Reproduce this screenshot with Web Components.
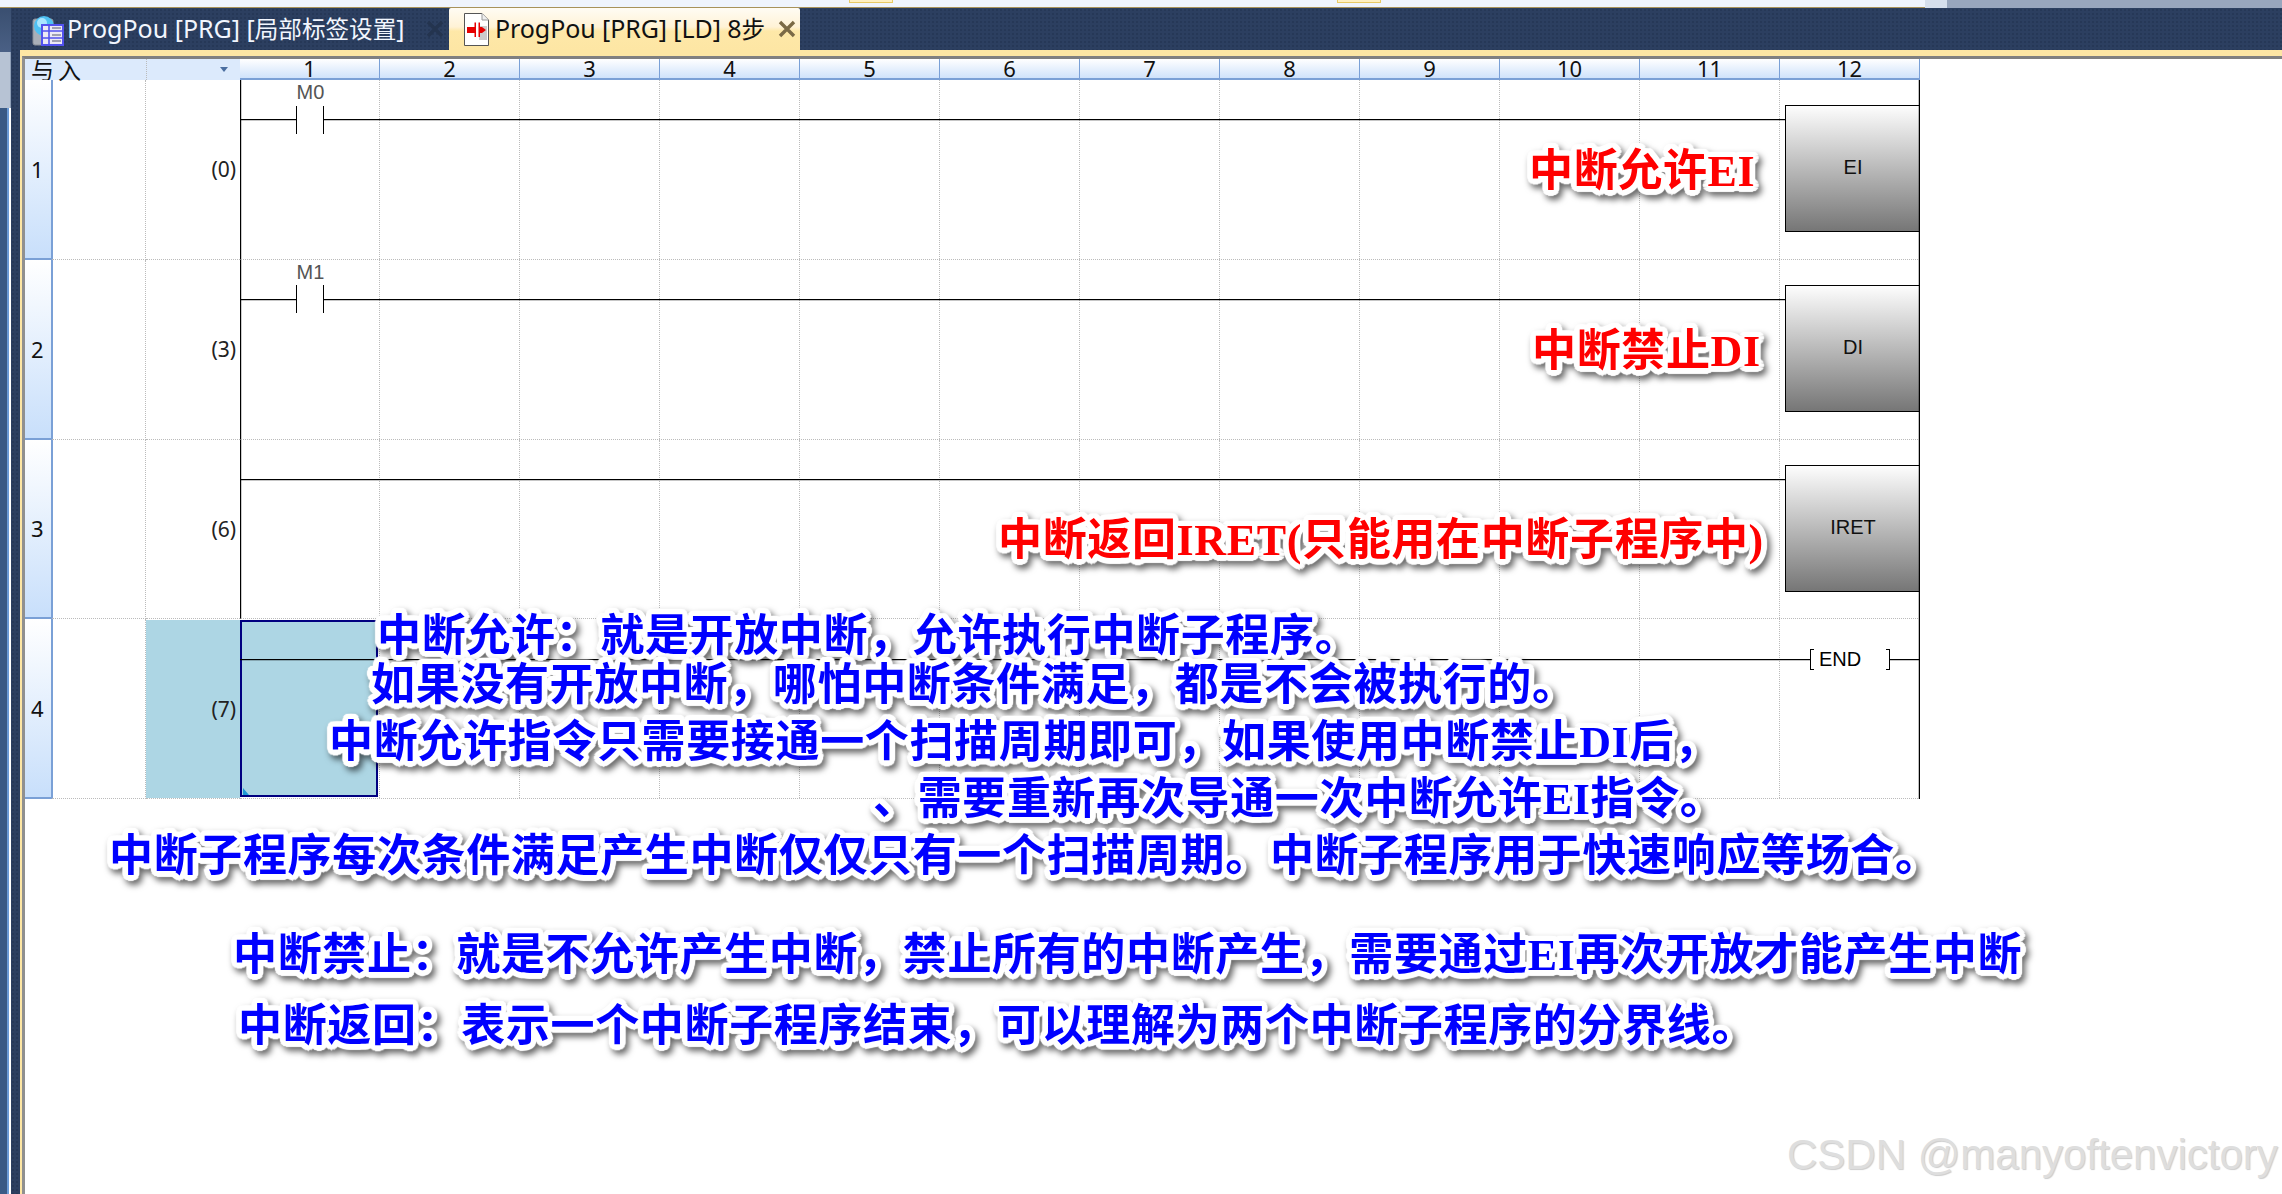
<!DOCTYPE html>
<html lang="zh">
<head>
<meta charset="utf-8">
<title>ProgPou</title>
<style>
html,body{margin:0;padding:0;background:#fff;}
body{width:2282px;height:1194px;overflow:hidden;font-family:"Noto Sans","Noto Sans CJK SC",sans-serif;}
</style>
</head>
<body>
<ide-app>
  <ide-tab slot="tabs" label="ProgPou [PRG] [局部标签设置]" kind="table"></ide-tab>
  <ide-tab slot="tabs" label="ProgPou [PRG] [LD] 8步" kind="ladder" active></ide-tab>
  <ladder-grid slot="doc">
    <ladder-row n="1" step="(0)" contact="M0" box="EI"></ladder-row>
    <ladder-row n="2" step="(3)" contact="M1" box="DI"></ladder-row>
    <ladder-row n="3" step="(6)" box="IRET"></ladder-row>
    <ladder-row n="4" step="(7)" end current></ladder-row>
  </ladder-grid>
  <note-text slot="notes" x="1529" y="172" color="#ff0000">中断允许EI</note-text>
  <note-text slot="notes" x="1532" y="352" color="#ff0000">中断禁止DI</note-text>
  <note-text slot="notes" x="998" y="541" color="#ff0000">中断返回IRET(只能用在中断子程序中)</note-text>
  <note-text slot="notes" x="377" y="637">中断允许：就是开放中断，允许执行中断子程序。</note-text>
  <note-text slot="notes" x="371" y="686">如果没有开放中断，哪怕中断条件满足，都是不会被执行的。</note-text>
  <note-text slot="notes" x="329" y="743">中断允许指令只需要接通一个扫描周期即可，如果使用中断禁止DI后，</note-text>
  <note-text slot="notes" x="873" y="800">、需要重新再次导通一次中断允许EI指令。</note-text>
  <note-text slot="notes" x="109" y="857">中断子程序每次条件满足产生中断仅仅只有一个扫描周期。中断子程序用于快速响应等场合。</note-text>
  <note-text slot="notes" x="233" y="956">中断禁止：就是不允许产生中断，禁止所有的中断产生，需要通过EI再次开放才能产生中断</note-text>
  <note-text slot="notes" x="238" y="1027">中断返回：表示一个中断子程序结束，可以理解为两个中断子程序的分界线。</note-text>
  <water-mark slot="notes">CSDN @manyoftenvictory</water-mark>
</ide-app>
<script>
const shadow=(el,html)=>{el.attachShadow({mode:'open'}).innerHTML=html;};

customElements.define('ide-app',class extends HTMLElement{
  constructor(){super();shadow(this,`<style>
    :host{display:grid;grid-template-rows:8px 1fr;width:2282px;height:1194px;position:relative;overflow:hidden;}
    .strip{display:flex;height:8px;background:#eff4fd;box-sizing:border-box;}
    .left{width:1925px;box-sizing:border-box;border-bottom:1px solid #a8925a;display:flex;}
    .s1{margin-left:849px;width:42px;height:2px;background:#fff0c2;border:1px solid #e8c964;border-top:0;}
    .s2{margin-left:444px;width:42px;height:2px;background:#fff0c2;border:1px solid #e8c964;border-top:0;}
    .mid{width:22px;background:#d6dfec;}
    .right{flex:1;background:#98a6bd;}
    .main{display:flex;min-height:0;}
    .side{width:11px;display:flex;flex-direction:column;background:#fff;}
    .side .a{height:44px;background:linear-gradient(#3a4f70,#4a6085);}
    .side .b{height:56px;background:#b7c3d4;border-right:1px solid #8fa0b8;box-sizing:border-box;}
    .side .c{flex:1;width:9px;background:linear-gradient(90deg,#3a5a85 0 7px,#6b9bd6 7px 9px);}
    .dock{flex:1;display:flex;flex-direction:column;min-width:0;
      background-color:#2c3f60;background-image:radial-gradient(#263857 1px,transparent 1.2px);background-size:4px 4px;}
    .tabs{height:42px;display:flex;padding-left:19px;}
    .doc{flex:1;margin-left:9px;min-height:0;border-top:6px solid #fde6a4;border-left:2px solid #fde6a4;}
    .doc2{height:100%;box-sizing:border-box;border-top:3px solid #808080;border-left:3px solid #909090;background:#fff;}
    </style>
    <div class="strip"><div class="left"><div class="s1"></div><div class="s2"></div></div><div class="mid"></div><div class="right"></div></div>
    <div class="main">
      <div class="side"><div class="a"></div><div class="b"></div><div class="c"></div></div>
      <div class="dock">
        <div class="tabs"><slot name="tabs"></slot></div>
        <div class="doc"><div class="doc2"><slot name="doc"></slot></div></div>
      </div>
    </div>
    <slot name="notes"></slot>`);}
});

customElements.define('ide-tab',class extends HTMLElement{
  connectedCallback(){
    const active=this.hasAttribute('active');
    const icon=this.getAttribute('kind')==='table'
    ?`<svg width="32" height="33" viewBox="0 0 32 33"><rect x="1" y="6" width="20" height="26" rx="2" fill="#a9afb8" stroke="#8a8f99"/><circle cx="12" cy="13" r="10" fill="#4fc0f2"/><circle cx="10" cy="10" r="5" fill="#a8e6ff"/><rect x="10" y="12" width="21" height="20" fill="#ece9f4" stroke="#5252ee" stroke-width="2"/><path d="M10 18H31M17 12V32M10 25H31" stroke="#5252ee" stroke-width="1.6" fill="none"/><path d="M20 15h9M20 22h9M20 28h9" stroke="#a0a0b0" stroke-width="2"/></svg>`
    :`<svg width="25" height="33" viewBox="0 0 25 33"><path d="M.5.5H18L24.5 7V32.5H.5Z" fill="#fff" stroke="#555"/><path d="M18 .5V7H24.5" fill="#eee" stroke="#999"/><path d="M15 13h8v14h-8z" fill="#ccc"/><path d="M3 14H10.5V9.5H12V24H10.5V20H3Z" fill="#e60000"/><path d="M14.5 9.5H16V14H18L22 17 18 20H16V24H14.5Z" fill="#e60000"/></svg>`;
    const label=this.getAttribute('label').replace(/[\u4e00-\u9fff]+/g,m=>`<span class="cjk">${m}</span>`);
    shadow(this,`<style>
      :host{display:flex;align-items:center;box-sizing:border-box;height:42px;color:${active?'#111':'#f2f6fe'};
        font:25px/1 "Noto Sans","Noto Sans CJK SC",sans-serif;white-space:nowrap;
        ${active?'width:351px;padding-left:15px;background:linear-gradient(#fffcf4 0,#fff2d6 45%,#fee8a8 55%,#fde6a4 100%);border-radius:2px 2px 0 0;':'width:419px;padding-left:2px;'}}
      .i{display:flex;width:${active?31:35}px;flex:none;}
      .l{width:${active?283:359}px;flex:none;${active?'letter-spacing:-.08px;':''}}
      .cjk{font-size:23.6px;}
      svg.x{flex:none;}
      </style><span class="i">${icon}</span><span class="l">${label}</span>
      <svg class="x" width="18" height="18" viewBox="0 0 18 18"><path d="M2 2 16 16M16 2 2 16" stroke="${active?'#7b6a46':'#24344f'}" stroke-width="3.4"/></svg>`);
  }
});

customElements.define('ladder-grid',class extends HTMLElement{
  constructor(){super();
    const cols=Array.from({length:12},(_,i)=>`<div class="c">${i+1}</div>`).join('');
    shadow(this,`<style>
      :host{display:grid;grid-template-columns:27px 94px 94px repeat(12,140px);grid-template-rows:21px repeat(4,179.75px);width:1895px;}
      .h0{background:#dceafc;font:23px/21px "Noto Sans CJK SC",sans-serif;color:#111;padding-left:6px;grid-column:1 / span 2;box-sizing:border-box;letter-spacing:4px;}
      .h1{background:#dceafc;border-left:1px dotted #bbb;position:relative;box-sizing:border-box;}
      .h1 svg{position:absolute;left:72px;top:8px;}
      .c{background:linear-gradient(#fff,#cfe2fb);border-right:1px solid #7aa0d6;border-bottom:2px solid #7aa0d6;box-sizing:border-box;text-align:center;font:22px/18px "Noto Sans",sans-serif;color:#111;}
      ::slotted(ladder-row){display:contents;}
      </style><div class="h0">与入</div><div class="h1"><svg width="10" height="6"><path d="M1 0H9L5 5Z" fill="#4a6ea0"/></svg></div>${cols}<slot></slot>`);}
});

customElements.define('ladder-row',class extends HTMLElement{
  connectedCallback(){
    const a=n=>this.getAttribute(n);
    const cur=this.hasAttribute('current');
    const vlines=Array.from({length:11},(_,i)=>`<i style="left:${(i+1)*140-(cur?1:2)}px"></i>`).join('');
    const wire=a('contact')
      ?`<div class="w" style="flex:none;width:55px"></div><div class="ct"></div><div class="w"></div>`
      :`<div class="w"></div>`;
    const tail=this.hasAttribute('end')
      ?`<div class="b1"></div><div class="endt">END</div><div class="b2"></div><div class="w" style="flex:none;width:30px"></div>`:'';
    const box=a('box')?`<div class="box">${a('box')}</div>`:'';
    shadow(this,`<style>
      :host{display:contents;}
      .n{background:linear-gradient(#fff,#c8dffb);border-right:2px solid #7aa0d6;border-bottom:2px solid #7aa0d6;box-sizing:border-box;font:22px/1 "Noto Sans",sans-serif;color:#111;display:flex;align-items:center;padding-left:6px;margin-right:-1px;}
      .cm{border-bottom:1px dotted #bbb;box-sizing:border-box;border-right:1px dotted #bbb;}
      .st{border-bottom:1px dotted #bbb;box-sizing:border-box;font:21px/1 "Noto Sans",sans-serif;color:#222;display:flex;align-items:center;justify-content:flex-end;padding:1px 4px 0 0;${cur?'background:#add6e4;background-clip:padding-box;border-top:1px solid transparent;':''}}
      .r{grid-column:span 12;position:relative;box-sizing:border-box;border-bottom:1px dotted #bbb;display:flex;align-items:flex-start;
         ${cur?'':'border-left:1px solid #000;box-shadow:inset .5px 0 0 rgba(0,0,0,.4);'}}
      .r::after{content:"";position:absolute;right:0;top:0;bottom:-1px;border-right:1px solid #000;box-shadow:-1px 0 0 rgba(0,0,0,.25);}
      .gl i{position:absolute;top:0;bottom:0;border-left:1px dotted #bbb;}
      .cur{position:absolute;left:0;top:1px;bottom:1px;width:138px;box-sizing:border-box;background:#add6e4;border:2px solid #000080;}
      .cur::after{content:"";position:absolute;left:1px;bottom:0;border-left:6px solid #1e9ad6;border-top:7px solid transparent;}
      .body{position:relative;flex:1;display:flex;flex-direction:column;}
      .lb{height:${cur?26.2:25.6}px;width:139px;text-align:center;font:20px/25px "Liberation Sans",sans-serif;color:#555;}
      .ln{height:28px;display:flex;align-items:center;}
      .w{flex:1;height:1px;background:#000;box-shadow:0 .5px 0 rgba(0,0,0,.45);}
      .ct{width:28px;height:28px;box-sizing:border-box;border-left:1px solid #000;border-right:1px solid #000;flex:none;}
      .box{position:relative;margin-top:25px;flex:none;width:135px;height:127px;box-sizing:border-box;border:1.5px solid #000;border-right:0;background:linear-gradient(#fdfdfd,#767676);font:20px/1 "Liberation Sans",sans-serif;color:#111;display:flex;align-items:center;justify-content:center;padding-bottom:3px;}
      .b1,.b2{flex:none;width:4px;height:21px;box-sizing:border-box;border:1px solid #000;}
      .b1{border-right:0;} .b2{border-left:0;}
      .endt{flex:none;width:72px;padding-left:5px;box-sizing:border-box;font:20px/1 "Liberation Sans",sans-serif;color:#000;background:#fff;}
      </style>
      <div class="n">${a('n')}</div><div class="cm"></div><div class="st">${a('step')}</div>
      <div class="r"><div class="gl">${vlines}</div>${cur?'<div class="cur"></div>':''}
        <div class="body"><div class="lb">${a('contact')||''}</div><div class="ln">${wire}${tail}</div></div>${box}
      </div>`);
  }
});

customElements.define('note-text',class extends HTMLElement{
  connectedCallback(){
    const pts=[];for(let i=0;i<24;i++){const t=i/24*Math.PI*2;pts.push(`${(Math.cos(t)*5.5).toFixed(1)}px ${(Math.sin(t)*5.5).toFixed(1)}px 1px #fff`);}
    shadow(this,`<style>
      :host{position:absolute;left:${this.getAttribute('x')}px;top:${+this.getAttribute('y')-22}px;display:block;white-space:nowrap;
        font:700 44px/44px "Liberation Serif","Noto Sans CJK SC",serif;letter-spacing:.65px;color:${this.getAttribute('color')||'#0000ff'};
        text-shadow:${pts.join(',')};filter:drop-shadow(3px 4px 3px rgba(0,0,0,.6));}
      </style><slot></slot>`);
  }
});

customElements.define('water-mark',class extends HTMLElement{
  constructor(){super();shadow(this,`<style>
    :host{position:absolute;left:1787px;top:1130px;display:block;white-space:nowrap;font:42px/50px "Liberation Sans",sans-serif;color:#dedede;text-shadow:1px 1px 1px #ccc;}
    </style><slot></slot>`);}
});
</script>
</body>
</html>
